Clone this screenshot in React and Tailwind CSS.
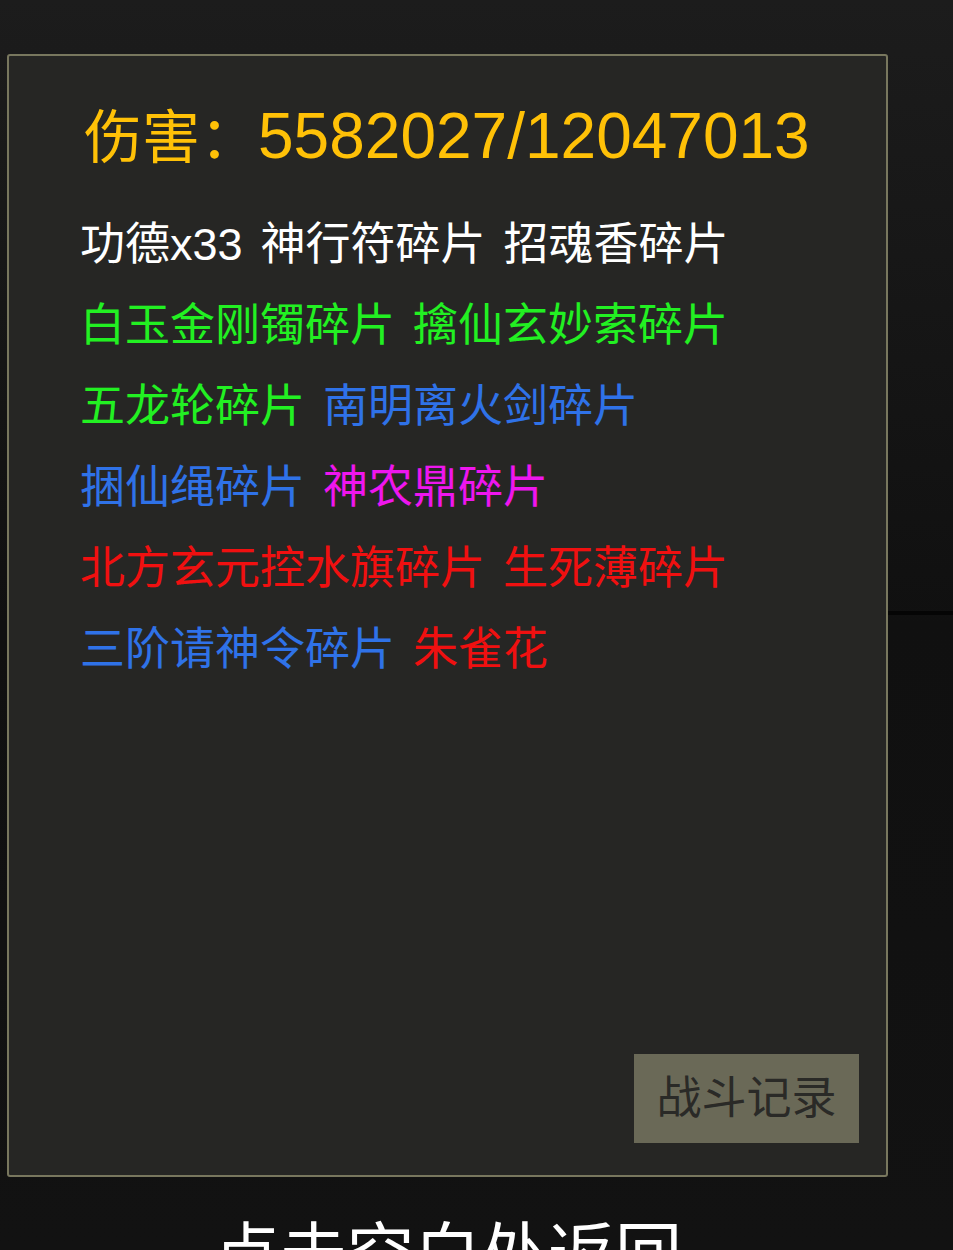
const rows = [
  [['功德x33', '#ffffff'], ['神行符碎片', '#ffffff'], ['招魂香碎片', '#ffffff']],
  [['白玉金刚镯碎片', '#22f022'], ['擒仙玄妙索碎片', '#22f022']],
  [['五龙轮碎片', '#22f022'], ['南明离火剑碎片', '#2f72e8']],
  [['捆仙绳碎片', '#2f72e8'], ['神农鼎碎片', '#ee16ee']],
  [['北方玄元控水旗碎片', '#f01010'], ['生死薄碎片', '#f01010']],
  [['三阶请神令碎片', '#2f72e8'], ['朱雀花', '#f01010']],
]

export default function App() {
  return (
    <div
      className="relative h-[1250px] w-[953px] overflow-hidden bg-gradient-to-b from-[#1c1c1c] via-[#101010] to-[#121212]"
      style={{ fontFamily: '"Liberation Sans", "Noto Sans CJK SC", sans-serif' }}
    >
      {/* faint seam of the screen behind the dialog */}
      <div className="absolute right-0 top-[611px] h-[4px] w-[70px] bg-[#050505]" />

      <div className="relative ml-[7px] mt-[54px] flex h-[1123px] w-[881px] flex-col rounded-[3px] border-2 border-[#78775e] bg-[#262624] pl-[71px] pt-[40px]">
        <div className="flex items-baseline pl-[4px] leading-[81px] text-[#ffc107]">
          <span className="text-[58px]">伤害：</span>
          <span className="text-[64px]">5582027/12047013</span>
        </div>

        <div className="mt-[26px] flex flex-col">
          {rows.map((row, i) => (
            <div key={i} className="flex h-[81px] items-center gap-[18px] text-[45px] leading-none">
              {row.map(([t, c]) => (
                <span key={t} style={{ color: c }}>{t}</span>
              ))}
            </div>
          ))}
        </div>

        <button className="mb-[32px] mr-[27px] mt-auto flex h-[89px] w-[225px] items-center justify-center self-end bg-[#6a6957] text-[45px] text-[#2a2a27]">
          战斗记录
        </button>
      </div>

      <div className="mt-[44px] w-[895px] text-center text-[67px] leading-none text-white">
        点击空白处返回
      </div>
    </div>
  )
}
